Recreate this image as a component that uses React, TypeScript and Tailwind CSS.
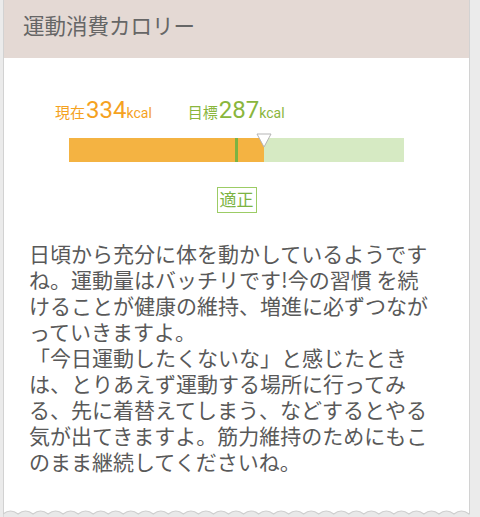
import React from "react";

const jp = { fontFamily: 'Roboto, "Noto Sans CJK JP", sans-serif' };

function Wave() {
  const period = 15;
  let d = "M0 0 ";
  for (let x = 0; x < 480; x += period) {
    d += `Q ${x + period / 2} -6 ${x + period} 0 `;
  }
  d += "L480 12 L0 12 Z";
  return (
    <svg width="100%" height="12" viewBox="0 -6 466 12" preserveAspectRatio="none" className="block">
      <path d={d} fill="#e9e9e9" stroke="#cfcfcf" strokeWidth="1.2" />
    </svg>
  );
}

export default function App() {
  const current = 334;
  const target = 287;
  const max = target * 2;
  const curPct = (current / max) * 100;
  return (
    <div className="min-h-[517px] w-[480px] bg-[#ebebeb] pl-[3px] pr-[10px]" style={jp}>
      <div className="border-x border-[#d2d2d2] bg-white">
        <div className="h-[58px] bg-[#e4d9d4] pl-[19px] pt-[12px]">
          <span className="text-[21.5px] leading-[30px] text-[#666666]">運動消費カロリー</span>
        </div>
        <div className="pt-[40px]">
          <div className="flex items-baseline pl-[51px] leading-none">
            <span className="flex items-baseline text-[#f5a21f]">
              <span className="text-[15px]">現在</span>
              <span className="ml-[1px] text-[24px]">{current}</span>
              <span className="text-[14px]">kcal</span>
            </span>
            <span className="ml-[36px] flex items-baseline text-[#8ab63d]">
              <span className="text-[15px]">目標</span>
              <span className="ml-[1px] text-[24px]">{target}</span>
              <span className="text-[14px]">kcal</span>
            </span>
          </div>
          <div className="relative ml-[65px] mt-[16px] h-[24px] w-[335px] bg-[#d6eac3]">
            <div className="absolute left-0 top-0 h-full bg-[#f4b342]" style={{ width: `${curPct}%` }} />
            <div className="absolute left-[166px] top-0 h-full w-[3px] bg-[#7cb342]" />
            <svg
              className="absolute top-[-5px]"
              style={{ left: `calc(${curPct}% - 7.5px)` }}
              width="16"
              height="16"
              viewBox="0 0 16 16"
            >
              <path d="M1 1 L15 1 L8 14 Z" fill="#ffffff" stroke="#b5b5b5" strokeWidth="1" strokeLinejoin="round" />
            </svg>
          </div>
          <div className="mt-[25px] flex justify-center">
            <span className="border-[1.5px] border-[#9ccc65] px-[2px] text-[17px] leading-[24px] text-[#7cb342]">適正</span>
          </div>
          <p
            className="mt-[27px] w-[429px] pb-[40px] pl-[25px] text-[21px] leading-[26px] text-[#595959]"
            style={{ fontFamily: '"Noto Sans CJK JP", sans-serif' }}
          >
            {"日頃から充分に体を動かしているようですね。運動量はバッチリです!今の習慣 を続けることが健康の維持、増進に必ずつながっていきますよ。"}
            <br />
            {"「今日運動したくないな」と感じたときは、とりあえず運動する場所に行ってみる、先に着替えてしまう、などするとやる気が出てきますよ。筋力維持のためにもこのまま継続してくださいね。"}
          </p>
        </div>
      </div>
      <div className="-mt-[6px]">
        <Wave />
      </div>
    </div>
  );
}
